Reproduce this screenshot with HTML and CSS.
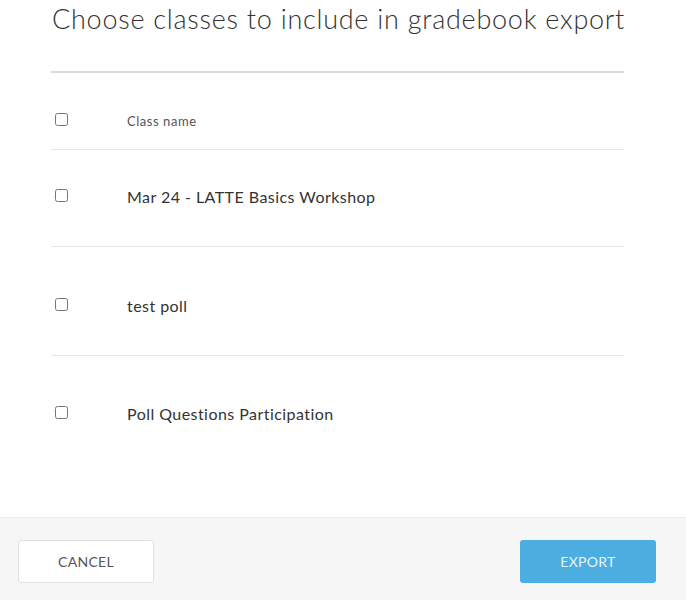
FILE: index.html
```html
<!DOCTYPE html>
<html>
<head>
<meta charset="utf-8">
<link rel="stylesheet" href="styles.css">
</head>
<body>
<div class="modal">
  <div class="content">
    <h1 class="title">Choose classes to include in gradebook export</h1>
    <div class="table">
      <div class="row head">
        <span class="cb"><input type="checkbox"></span>
        <span class="name">Class name</span>
      </div>
      <div class="row r1">
        <span class="cb"><input type="checkbox"></span>
        <span class="name">Mar 24 - LATTE Basics Workshop</span>
      </div>
      <div class="row r2">
        <span class="cb"><input type="checkbox"></span>
        <span class="name">test poll</span>
      </div>
      <div class="row r3 last">
        <span class="cb"><input type="checkbox"></span>
        <span class="name">Poll Questions Participation</span>
      </div>
    </div>
  </div>
  <div class="footer">
    <button class="btn cancel">CANCEL</button>
    <button class="btn export">EXPORT</button>
  </div>
</div>
</body>
</html>
```
FILE: styles.css
```css
html, body {
  margin: 0;
  padding: 0;
  background: #fff;
}
body {
  font-family: Lato, "Open Sans", sans-serif;
  color: #333;
}
.modal {
  width: 686px;
  height: 600px;
  display: flex;
  flex-direction: column;
}
.content {
  flex: 1;
  padding: 0 62px 0 51px;
}
.title {
  margin: 0;
  padding-top: 2px;
  height: 73px;
  box-sizing: border-box;
  font-size: 27px;
  font-weight: 300;
  letter-spacing: 0.74px;
  line-height: 34px;
  color: #333;
  padding-left: 1px;
  white-space: nowrap;
  border-bottom: 2px solid #dcdcdc;
}
.row {
  display: flex;
  align-items: center;
  border-bottom: 1px solid #e6e6e6;
}
.row.last {
  border-bottom: none;
}
.cb {
  width: 72px;
  display: flex;
  align-items: center;
  padding-left: 4px;
  margin-top: -3px;
}
.cb input {
  margin: 0;
  width: 13px;
  height: 13px;
}
.name {
  font-size: 16px;
  letter-spacing: 0.45px;
  line-height: 20px;
  color: #333;
}
.head {
  padding: 37px 0 18px;
  height: 21px;
}
.head .name {
  font-size: 13px;
  letter-spacing: 0.55px;
  color: #555;
}
.r1 {
  padding: 37px 0 39px;
}
.r2 {
  padding: 49px 0 39px;
}
.r3 {
  padding: 48px 0 0;
}
.footer {
  height: 83px;
  border-top: 1px solid #ececec;
  background: #f6f6f6;
  display: flex;
  justify-content: space-between;
  align-items: flex-start;
  padding: 22px 30px 0 18px;
  box-sizing: border-box;
}
.btn {
  width: 136px;
  height: 43px;
  border-radius: 3px;
  font-family: Lato, "Open Sans", sans-serif;
  font-size: 14px;
  letter-spacing: 0.3px;
  cursor: pointer;
}
.cancel {
  background: #fff;
  border: 1px solid #e0e0e0;
  color: #555;
}
.export {
  background: #4badE0;
  border: none;
  color: #e8f4fb;
}
```
